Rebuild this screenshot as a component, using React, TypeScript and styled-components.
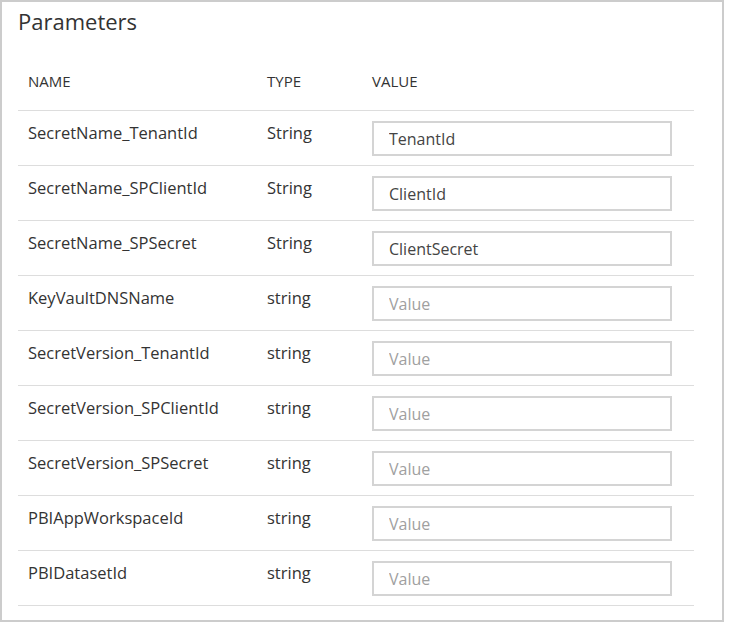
import React from "react";
import styled, { createGlobalStyle } from "styled-components";

const Global = createGlobalStyle`
  html, body { margin: 0; padding: 0; background: #fff; }
  body { font-family: "Open Sans", "Noto Sans", sans-serif; color: #333; }
`;

const Panel = styled.section`
  box-sizing: border-box;
  width: 724px;
  height: 622px;
  border: 2px solid #cccccc;
  padding: 0 28px 0 16px;
  background: #fff;
`;

const Title = styled.h2`
  margin: 0;
  height: 53px;
  padding-top: 6px;
  box-sizing: border-box;
  font-size: 22px;
  font-weight: 400;
  color: #333;
  line-height: 26px;
`;

const Table = styled.table`
  width: 676px;
  border-collapse: collapse;
  table-layout: fixed;
`;

const HeadCell = styled.th<{ $w: number }>`
  width: ${(p) => p.$w}px;
  height: 55px;
  box-sizing: border-box;
  padding: 0 10px 2px;
  text-align: left;
  font-size: 15px;
  font-weight: 400;
  color: #333;
  vertical-align: middle;
  border-bottom: 1px solid #dddddd;
`;

const Row = styled.tr`
  height: 55px;
  border-bottom: 1px solid #dddddd;
`;

const Cell = styled.td`
  box-sizing: border-box;
  padding: 11px 10px 0;
  vertical-align: top;
  font-size: 16.5px;
  line-height: 22px;
  color: #333;
  white-space: nowrap;
`;

const ValueCell = styled(Cell)`
  padding-top: 10px;
`;

const Input = styled.input`
  box-sizing: border-box;
  display: block;
  width: 300px;
  height: 35px;
  border: 2px solid #d4d4d4;
  padding: 1px 15px 0;
  font-family: inherit;
  font-size: 16px;
  color: #444;
  background: #fff;
  outline: none;
  &::placeholder { color: #a0a0a0; }
`;

const params = [
  { name: "SecretName_TenantId", type: "String", value: "TenantId" },
  { name: "SecretName_SPClientId", type: "String", value: "ClientId" },
  { name: "SecretName_SPSecret", type: "String", value: "ClientSecret" },
  { name: "KeyVaultDNSName", type: "string", value: "" },
  { name: "SecretVersion_TenantId", type: "string", value: "" },
  { name: "SecretVersion_SPClientId", type: "string", value: "" },
  { name: "SecretVersion_SPSecret", type: "string", value: "" },
  { name: "PBIAppWorkspaceId", type: "string", value: "" },
  { name: "PBIDatasetId", type: "string", value: "" },
];

export default function App() {
  return (
    <>
      <Global />
      <Panel>
        <Title>Parameters</Title>
        <Table>
          <thead>
            <tr>
              <HeadCell $w={239}>NAME</HeadCell>
              <HeadCell $w={105}>TYPE</HeadCell>
              <HeadCell $w={332}>VALUE</HeadCell>
            </tr>
          </thead>
          <tbody>
            {params.map((p) => (
              <Row key={p.name}>
                <Cell>{p.name}</Cell>
                <Cell>{p.type}</Cell>
                <ValueCell>
                  <Input defaultValue={p.value} placeholder="Value" />
                </ValueCell>
              </Row>
            ))}
          </tbody>
        </Table>
      </Panel>
    </>
  );
}
